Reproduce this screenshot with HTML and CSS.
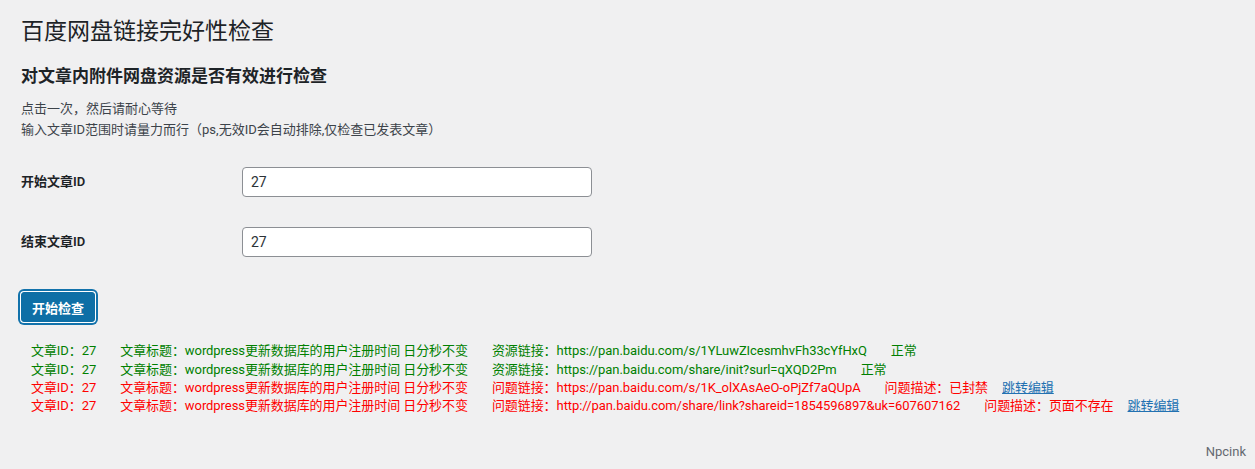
FILE: index.html
```html
<!DOCTYPE html>
<html lang="zh-CN">
<head>
<meta charset="utf-8">
<title>百度网盘链接完好性检查</title>
<link rel="stylesheet" href="styles.css">
</head>
<body>
<div class="wrap">
  <h1 class="page-title">百度网盘链接完好性检查</h1>
  <h2 class="sub-title">对文章内附件网盘资源是否有效进行检查</h2>
  <p class="desc">点击一次，然后请耐心等待<br>输入文章ID范围时请量力而行（ps,无效ID会自动排除,仅检查已发表文章）</p>

  <div class="form-table">
    <div class="form-row">
      <label class="form-label" for="start-id">开始文章ID</label>
      <div class="form-field"><input id="start-id" class="text-input" type="text" value="27"></div>
    </div>
    <div class="form-row">
      <label class="form-label" for="end-id">结束文章ID</label>
      <div class="form-field"><input id="end-id" class="text-input" type="text" value="27"></div>
    </div>
  </div>

  <p class="submit"><button class="button-primary" type="button">开始检查</button></p>

  <div class="results">
    <div class="result ok"><span class="item">文章ID：27</span><span class="item">文章标题：wordpress更新数据库的用户注册时间 日分秒不变</span><span class="item">资源链接：https://pan.baidu.com/s/1YLuwZIcesmhvFh33cYfHxQ</span><span class="item">正常</span></div>
    <div class="result ok"><span class="item">文章ID：27</span><span class="item">文章标题：wordpress更新数据库的用户注册时间 日分秒不变</span><span class="item">资源链接：https://pan.baidu.com/share/init?surl=qXQD2Pm</span><span class="item">正常</span></div>
    <div class="result bad"><span class="item">文章ID：27</span><span class="item">文章标题：wordpress更新数据库的用户注册时间 日分秒不变</span><span class="item">问题链接：https://pan.baidu.com/s/1K_olXAsAeO-oPjZf7aQUpA</span><span class="item item-last">问题描述：已封禁</span><a class="edit-link" href="#">跳转编辑</a></div>
    <div class="result bad"><span class="item">文章ID：27</span><span class="item">文章标题：wordpress更新数据库的用户注册时间 日分秒不变</span><span class="item">问题链接：http://pan.baidu.com/share/link?shareid=1854596897&amp;uk=607607162</span><span class="item item-last">问题描述：页面不存在</span><a class="edit-link" href="#">跳转编辑</a></div>
  </div>
</div>
<footer class="footer"><p class="footer-text">Npcink</p></footer>
</body>
</html>
```

FILE: styles.css
```css
html, body {
  margin: 0;
  padding: 0;
}

body {
  background: #f0f0f1;
  color: #3c434a;
  font-family: Roboto, "Noto Sans CJK SC", sans-serif;
  font-size: 13px;
  line-height: 1.4;
  min-height: 100vh;
  display: flex;
  flex-direction: column;
  box-sizing: border-box;
}

.wrap {
  padding: 0 21px;
}

.page-title {
  margin: 17px 0 0;
  font-size: 23px;
  line-height: 30px;
  font-weight: 400;
  color: #1d2327;
}

.sub-title {
  margin: 17px 0 0;
  font-size: 17px;
  line-height: 24px;
  font-weight: 700;
  color: #1d2327;
}

.desc {
  margin: 10px 0 0;
  line-height: 21px;
  color: #3c434a;
}

.form-table {
  margin-top: 12px;
}

.form-row {
  display: flex;
  align-items: center;
  padding: 15px 0;
}

.form-label {
  width: 221px;
  font-weight: 600;
  color: #1d2327;
}

.text-input {
  box-sizing: border-box;
  width: 350px;
  height: 30px;
  margin: 0;
  padding: 0 8px;
  border: 1px solid #8c8f94;
  border-radius: 4px;
  background: #fff;
  color: #2c3338;
  font-family: Roboto, "Noto Sans CJK SC", sans-serif;
  font-size: 14px;
  display: block;
}

.submit {
  margin: 20px 0 0;
  padding: 0;
  height: 30px;
}

.button-primary {
  box-sizing: border-box;
  height: 30px;
  width: 74px;
  padding: 0 10px;
  margin: 0;
  border: 1px solid #0e6ea5;
  border-radius: 3px;
  background: #0e6fa6;
  color: #fff;
  font-family: Roboto, "Noto Sans CJK SC", sans-serif;
  font-size: 13px;
  font-weight: 700;
  box-shadow: 0 0 0 1px #fff, 0 0 0 3px #1272ab;
  cursor: pointer;
}

.results {
  margin-top: 20px;
  padding-left: 10px;
}

.result {
  line-height: 18px;
  white-space: nowrap;
  letter-spacing: -0.07px;
}

.result:first-child {
  margin-bottom: 1px;
}

.result.ok {
  color: #008000;
}

.result.bad {
  color: #f00;
}

.item {
  margin-right: 24px;
}

.item-last {
  margin-right: 14px;
}

.edit-link {
  color: #2271b1;
  text-decoration: underline;
}

.footer {
  margin-top: auto;
  display: flex;
  justify-content: flex-end;
  padding: 0 9px 7px 0;
}

.footer-text {
  margin: 0;
  line-height: 20px;
  color: #646970;
}
```
